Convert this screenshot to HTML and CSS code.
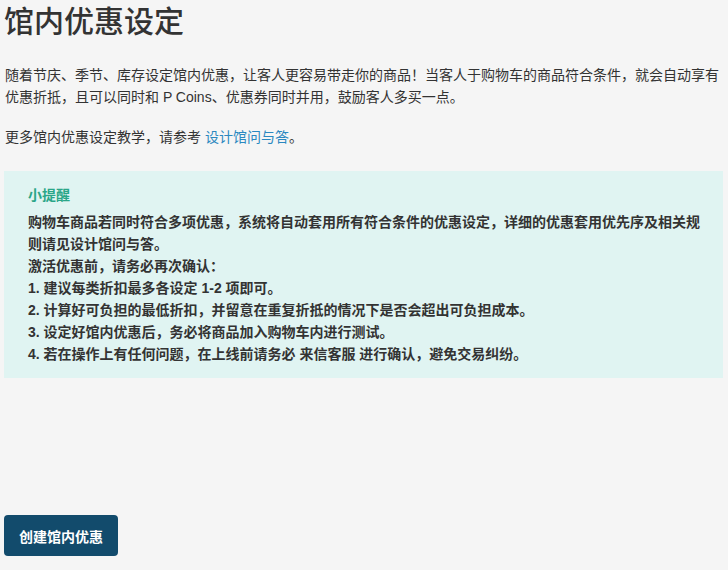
FILE: index.html
```html
<!DOCTYPE html>
<html lang="zh-CN">

<head>
    <meta charset="UTF-8">
    <meta name="viewport" content="width=device-width, initial-scale=1.0">
    <title>馆内优惠设定</title>
    <link rel="stylesheet" href="styles.css">
</head>

<body>
    <div class="page">
        <h1 class="title">馆内优惠设定</h1>

        <p class="intro">随着节庆、季节、库存设定馆内优惠，让客人更容易带走你的商品！当客人于购物车的商品符合条件，就会自动享有优惠折抵，且可以同时和 P Coins、优惠券同时并用，鼓励客人多买一点。</p>

        <p class="intro more">更多馆内优惠设定教学，请参考 <a href="#" class="link">设计馆问与答</a>。</p>

        <div class="notice">
            <div class="notice-title">小提醒</div>
            <div class="notice-body">
                <p>购物车商品若同时符合多项优惠，系统将自动套用所有符合条件的优惠设定，详细的优惠套用优先序及相关规则请见设计馆问与答。</p>
                <p>激活优惠前，请务必再次确认：</p>
                <p>1. 建议每类折扣最多各设定 1-2 项即可。</p>
                <p>2. 计算好可负担的最低折扣，并留意在重复折抵的情况下是否会超出可负担成本。</p>
                <p>3. 设定好馆内优惠后，务必将商品加入购物车内进行测试。</p>
                <p>4. 若在操作上有任何问题，在上线前请务必 来信客服 进行确认，避免交易纠纷。</p>
            </div>
        </div>

        <div class="actions">
            <button type="button" class="btn-create">创建馆内优惠</button>
        </div>
    </div>
</body>

</html>
```

FILE: styles.css
```css
/* Layout for the in-store discount page */

body {
    font-family: "Liberation Sans", "Noto Sans CJK SC", sans-serif;
    margin: 0;
    padding: 0;
    background-color: #f5f5f5;
    color: #333;
}

.page {
    padding: 0 5px 0 4px;
}

.title {
    margin: 0;
    padding-top: 2px;
    font-size: 30px;
    line-height: 40px;
    font-weight: 500;
    color: #333;
}

.intro {
    margin: 22px 0 0 1px;
    font-size: 14px;
    line-height: 22px;
}

.intro.more {
    margin-top: 18px;
}

.link {
    color: #2a88c0;
    text-decoration: none;
}

.notice {
    margin-top: 23px;
    padding: 13px 23px 13px 24px;
    background-color: #e0f4f2;
}

.notice-title {
    font-size: 14px;
    font-weight: bold;
    line-height: 22px;
    color: #2aa688;
    margin-bottom: 5px;
}

.notice-body p {
    margin: 0;
    font-size: 14px;
    font-weight: bold;
    line-height: 22px;
    color: #333;
}

.actions {
    margin-top: 137px;
}

.btn-create {
    padding: 0 15px;
    height: 41px;
    border: none;
    border-radius: 4px;
    background-color: #124b6c;
    color: #fff;
    font-family: inherit;
    font-size: 14px;
    font-weight: bold;
    cursor: pointer;
}
```
